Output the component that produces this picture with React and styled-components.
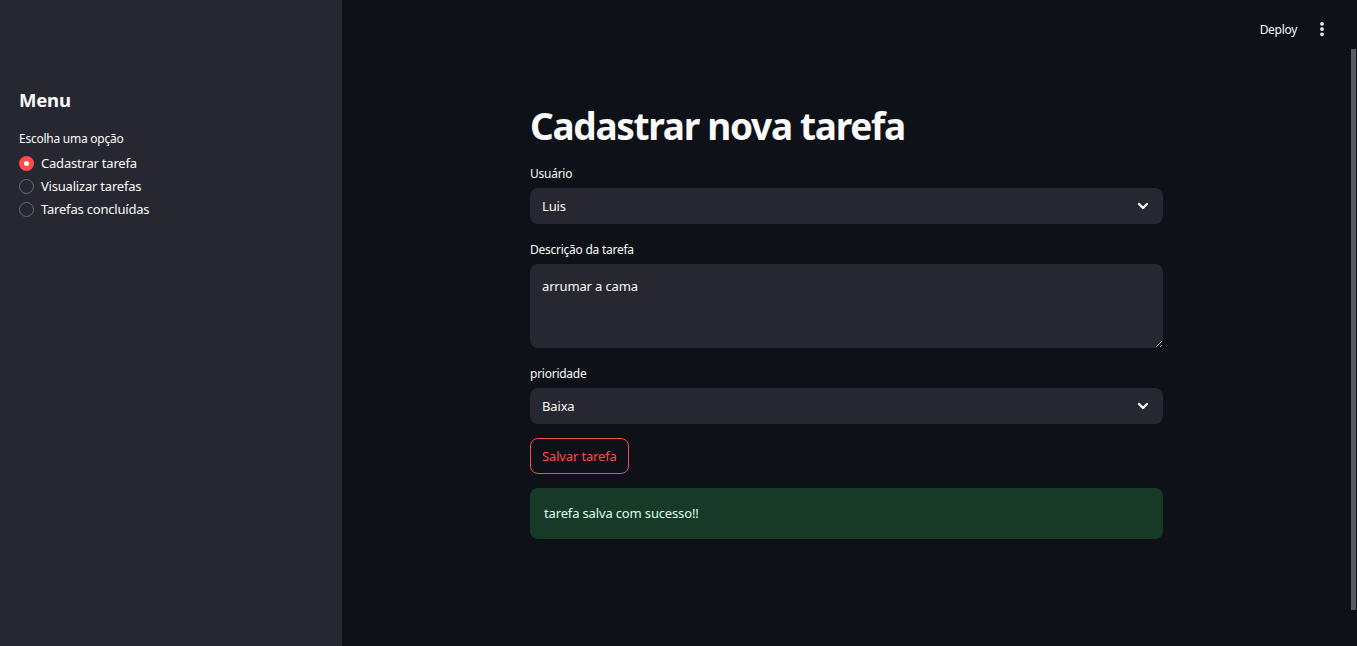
import React, { useState } from 'react';
import styled, { createGlobalStyle } from 'styled-components';
import { ChevronDown, EllipsisVertical } from 'lucide-react';

const GlobalStyle = createGlobalStyle`
  html, body {
    margin: 0;
    padding: 0;
    background: #0e1117;
    font-family: "Noto Sans", "Open Sans", sans-serif;
    color: #fafafa;
  }
  * { box-sizing: border-box; }
`;

const options = ['Cadastrar tarefa', 'Visualizar tarefas', 'Tarefas concluídas'];

const App = () => {
  const [choice, setChoice] = useState(options[0]);

  return (
    <>
      <GlobalStyle />
      <Layout>
        <Sidebar>
          <SideTitle>Menu</SideTitle>
          <Label>Escolha uma opção</Label>
          <RadioGroup>
            {options.map((opt) => (
              <RadioRow key={opt} onClick={() => setChoice(opt)}>
                <RadioDot checked={choice === opt} />
                <RadioText>{opt}</RadioText>
              </RadioRow>
            ))}
          </RadioGroup>
        </Sidebar>

        <Main>
          <Header>
            <DeployButton>Deploy</DeployButton>
            <MenuButton>
              <EllipsisVertical size={18} strokeWidth={3} />
            </MenuButton>
          </Header>

          <Content>
            <Title>Cadastrar nova tarefa</Title>

            <Field>
              <Label>Usuário</Label>
              <SelectBox>
                <span>Luis</span>
                <ChevronDown size={16} strokeWidth={3.5} />
              </SelectBox>
            </Field>

            <Field>
              <Label>Descrição da tarefa</Label>
              <TextArea defaultValue="arrumar a cama" />
            </Field>

            <Field>
              <Label>prioridade</Label>
              <SelectBox>
                <span>Baixa</span>
                <ChevronDown size={16} strokeWidth={3.5} />
              </SelectBox>
            </Field>

            <SaveButton>Salvar tarefa</SaveButton>

            <SuccessBox>tarefa salva com sucesso!!</SuccessBox>
          </Content>

          <ScrollThumb />
        </Main>
      </Layout>
    </>
  );
};

const Layout = styled.div`
  display: flex;
  height: 100vh;
  overflow: hidden;
`;

const Sidebar = styled.aside`
  width: 342px;
  flex-shrink: 0;
  background: #262730;
  padding: 86px 19px 0;
`;

const SideTitle = styled.h2`
  margin: 0 0 17px;
  font-size: 18.5px;
  font-weight: 700;
  line-height: 28px;
  letter-spacing: -0.2px;
  color: #fafafa;
`;

const Label = styled.div`
  font-size: 12px;
  line-height: 16px;
  letter-spacing: -0.25px;
  color: #fafafa;
  margin-bottom: 6px;
`;

const RadioGroup = styled.div`
  display: flex;
  flex-direction: column;
  gap: 3px;
  margin-top: 6px;
`;

const RadioRow = styled.label`
  display: flex;
  align-items: center;
  gap: 7px;
  height: 20px;
  cursor: pointer;
`;

const RadioDot = styled.span`
  width: 15px;
  height: 15px;
  border-radius: 50%;
  flex-shrink: 0;
  background: ${({ checked }) => (checked ? '#ff4b4b' : '#262730')};
  border: ${({ checked }) => (checked ? 'none' : '1px solid #6c6d75')};
  display: flex;
  align-items: center;
  justify-content: center;
  &::after {
    content: '';
    display: ${({ checked }) => (checked ? 'block' : 'none')};
    width: 5px;
    height: 5px;
    border-radius: 50%;
    background: #fff;
  }
`;

const RadioText = styled.span`
  font-size: 13px;
  letter-spacing: -0.2px;
  color: #fafafa;
`;

const Main = styled.main`
  flex: 1;
  position: relative;
  display: flex;
  flex-direction: column;
  padding-right: 6px;
`;

const Header = styled.header`
  height: 58px;
  display: flex;
  align-items: center;
  justify-content: flex-end;
  gap: 14px;
  padding-right: 18px;
`;

const DeployButton = styled.button`
  background: transparent;
  border: none;
  color: #fafafa;
  font-family: inherit;
  font-size: 12px;
  letter-spacing: -0.3px;
  padding: 4px 0;
  cursor: pointer;
`;

const MenuButton = styled.button`
  background: transparent;
  border: none;
  color: #fafafa;
  display: flex;
  align-items: center;
  padding: 2px;
  cursor: pointer;
`;

const Content = styled.div`
  width: 633px;
  margin: 0 auto;
  padding-top: 40px;
  display: flex;
  flex-direction: column;
`;

const Title = styled.h1`
  margin: 0 0 12px;
  font-size: 37px;
  font-weight: 700;
  line-height: 56px;
  letter-spacing: -1.3px;
  color: #fafafa;
`;

const Field = styled.div`
  display: flex;
  flex-direction: column;
  margin-bottom: 18px;
`;

const SelectBox = styled.div`
  height: 36px;
  border-radius: 8px;
  background: #262730;
  display: flex;
  align-items: center;
  justify-content: space-between;
  padding: 0 12px 0 12px;
  font-size: 13px;
  letter-spacing: -0.15px;
  color: #fafafa;
`;

const TextArea = styled.textarea`
  height: 84px;
  border-radius: 8px;
  background: #262730;
  border: none;
  outline: none;
  color: #fafafa;
  font-family: inherit;
  font-size: 13px;
  letter-spacing: -0.15px;
  line-height: 20px;
  padding: 12px 12px;
  resize: vertical;
`;

const SaveButton = styled.button`
  align-self: flex-start;
  height: 36px;
  padding: 0 11px;
  margin-top: -4px;
  border-radius: 8px;
  border: 1px solid #ff4b4b;
  background: transparent;
  color: #ff4b4b;
  font-family: inherit;
  font-size: 13px;
  letter-spacing: -0.15px;
  cursor: pointer;
`;

const SuccessBox = styled.div`
  margin-top: 14px;
  border-radius: 8px;
  background: #173928;
  color: #dffde9;
  font-size: 13px;
  letter-spacing: -0.15px;
  line-height: 20px;
  padding: 15px 14px 16px;
`;

const ScrollThumb = styled.div`
  position: absolute;
  right: 1px;
  top: 49px;
  bottom: 36px;
  width: 5px;
  background: #5c5d63;
`;

export default App;
